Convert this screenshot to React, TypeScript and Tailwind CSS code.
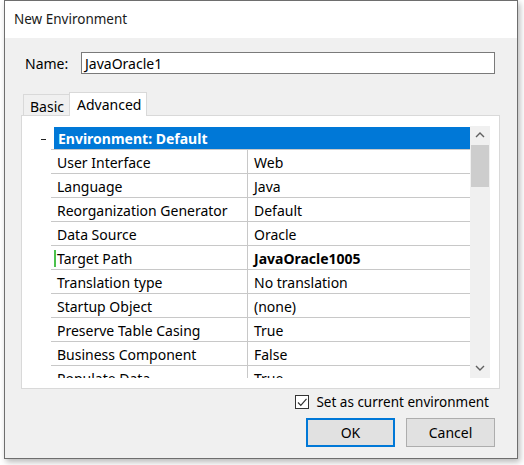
import React from 'react';

interface Prop {
  name: string;
  value: string;
  bold?: boolean;
  marked?: boolean;
}

const props: Prop[] = [
  { name: 'User Interface', value: 'Web' },
  { name: 'Language', value: 'Java' },
  { name: 'Reorganization Generator', value: 'Default' },
  { name: 'Data Source', value: 'Oracle' },
  { name: 'Target Path', value: 'JavaOracle1005', bold: true, marked: true },
  { name: 'Translation type', value: 'No translation' },
  { name: 'Startup Object', value: '(none)' },
  { name: 'Preserve Table Casing', value: 'True' },
  { name: 'Business Component', value: 'False' },
  { name: 'Populate Data', value: 'True' },
];

const font = { fontFamily: '"Noto Sans", "Open Sans", sans-serif' };

const App: React.FC = () => {
  return (
    <div className="w-[524px] h-[465px] bg-white text-[#000]" style={font}>
      <div className="ml-[4px] w-[514px] h-[459px] border border-[#6e6e6e] bg-[#f0f0f0] flex flex-col shadow-[2px_3px_6px_rgba(0,0,0,0.28)]">
        {/* title bar */}
        <div className="h-[37px] bg-white flex items-center pl-[9px] text-[13.5px] text-[#1a1a1a]">
          New Environment
        </div>

        {/* name */}
        <div className="flex items-center mt-[14px] pl-[20px] text-[14px]">
          <span className="w-[56px]">Name:</span>
          <div className="w-[414px] h-[22px] border border-[#7a7a7a] bg-white flex items-center pl-[3px]">
            JavaOracle1
          </div>
        </div>

        {/* tabs */}
        <div className="flex items-end mt-[17px] ml-[18px] h-[24px] text-[14px]">
          <div className="h-[21px] w-[47px] border border-b-0 border-[#d9d9d9] flex items-center pl-[6px] pt-[2px]">
            Basic
          </div>
          <div className="h-[24px] w-[78px] border border-b-0 border-[#d9d9d9] bg-white flex items-center pl-[7px] ml-[-1px] relative z-10 mb-[-1px]">
            Advanced
          </div>
        </div>
        <div className="ml-[16px] w-[479px] h-[274px] border border-[#d9d9d9] bg-white pt-[10px] flex">
          <div className="w-[29px] relative">
            <div className="absolute left-[19px] top-[13px] w-[5px] h-[1px] bg-[#222]" />
          </div>
          <div className="w-[419px] h-[252px] overflow-hidden text-[14px]">
            <div className="h-[22px] ml-[3px] mt-[1px] bg-[#0078d7] text-white font-bold flex items-center pl-[4px]">
              Environment: Default
            </div>
            {props.map((p) => (
              <div key={p.name} className="h-[24px] flex border-t border-[#c8c8c8]">
                <div className="w-[197px] border-r border-[#c8c8c8] flex items-center pl-[3px] pt-[2px]">
                  <span className={`w-[2px] h-[17px] mr-[1px] ${p.marked ? 'bg-[#4cc24c]' : ''}`} />
                  {p.name}
                </div>
                <div className={`flex items-center pl-[6px] pt-[2px] ${p.bold ? 'font-bold' : ''}`}>
                  {p.value}
                </div>
              </div>
            ))}
          </div>
          <div className="w-[20px] h-[252px] bg-[#f0f0f0] flex flex-col items-center">
            <svg className="mt-[5px]" width="10" height="8" viewBox="0 0 10 8">
              <path d="M1 6 L5 2 L9 6" fill="none" stroke="#606060" strokeWidth="1.4" />
            </svg>
            <div className="w-[18px] h-[42px] bg-[#cdcdcd] mt-[6px]" />
            <div className="flex-1" />
            <svg className="mb-[6px]" width="10" height="8" viewBox="0 0 10 8">
              <path d="M1 2 L5 6 L9 2" fill="none" stroke="#606060" strokeWidth="1.4" />
            </svg>
          </div>
        </div>

        {/* footer */}
        <div className="flex items-center justify-end pr-[28px] mt-[3px] text-[13.5px]">
          <div className="w-[14px] h-[14px] border border-[#333] bg-white flex items-center justify-center mr-[7px]">
            <svg width="12" height="12" viewBox="0 0 12 12">
              <path d="M2 6.5 L4.8 9.3 L10.5 2.8" fill="none" stroke="#333" strokeWidth="1.2" />
            </svg>
          </div>
          Set as current environment
        </div>
        <div className="flex justify-end gap-[11px] pr-[22px] mt-[6px] text-[14px]">
          <div className="w-[89px] h-[29px] border-2 border-[#0078d7] bg-[#e1e1e1] flex items-center justify-center">
            OK
          </div>
          <div className="w-[89px] h-[29px] border border-[#adadad] bg-[#e1e1e1] flex items-center justify-center">
            Cancel
          </div>
        </div>
      </div>
    </div>
  );
};

export default App;
